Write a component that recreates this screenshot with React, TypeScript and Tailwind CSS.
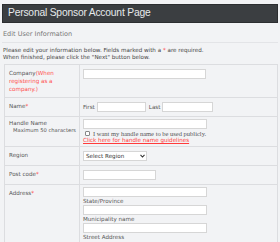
import React from 'react';

const labelCls = 'border border-[#dcdde0] align-top pl-[4px] pr-[2px] py-[4px] text-[#555]';
const fieldCls = 'border border-[#dcdde0] align-top px-[3px] py-[4px]';
const inputCls = 'block h-[10px] bg-white border border-[#d6d6d6]';

function Req() {
  return <span className="text-[#ff3b3b]">*</span>;
}

export default function App() {
  return (
    <div
      className="w-[280px] h-[242px] overflow-hidden bg-[#f2f3f5] px-[2px] pt-[4px] text-[7px] leading-[8px] text-[#555]"
      style={{ fontFamily: '"DejaVu Sans", Verdana, sans-serif' }}
    >
      {/* Title bar */}
      <div className="h-[19px] bg-[#3b3e41] border border-[#2c2e30] flex items-center pl-[5px]">
        <span
          className="text-[10.3px] leading-none text-[#e6e9eb] tracking-[-0.2px]"
          style={{ fontFamily: '"Liberation Sans", Arial, sans-serif' }}
        >
          Personal Sponsor Account Page
        </span>
      </div>

      <div className="mt-[7px] px-[1px] pb-[4px] border-b border-[#e3e4e7] text-[6.5px] text-[#777]">
        Edit User Information
      </div>

      <p className="mt-[4px] px-[1px] text-[5.6px] leading-[7px] text-[#444]">
        Please edit your information below. Fields marked with a <Req /> are required.
        <br />
        When finished, please click the "Next" button below.
      </p>

      <table className="table-fixed mt-[3px] ml-[2px] w-[273px] border-collapse text-[5.6px] leading-[8px]">
        <colgroup>
          <col className="w-[75px]" />
          <col className="w-[198px]" />
        </colgroup>
        <tbody>
          <tr className="h-[30px]">
            <td className={labelCls}>
              Company<span className="text-[#ff4d4d]">(When registering as a company.)</span>
            </td>
            <td className={fieldCls}>
              <div className={`${inputCls} w-[123px]`} />
            </td>
          </tr>
          <tr className="h-[19px]">
            <td className={`${labelCls} align-middle`}>
              Name<Req />
            </td>
            <td className={`${fieldCls} align-middle`}>
              <div className="flex items-center gap-[2px]">
                <span>First</span>
                <div className={`${inputCls} w-[49px]`} />
                <span className="ml-[1px]">Last</span>
                <div className={`${inputCls} w-[51px]`} />
              </div>
            </td>
          </tr>
          <tr className="h-[29px]">
            <td className={`${labelCls} pt-[3px] leading-[7px]`}>
              Handle Name
              <div className="pl-[4px] whitespace-nowrap text-[5.2px]">Maximum 50 characters</div>
            </td>
            <td className={`${fieldCls} pt-[2px] pb-[2px]`}>
              <div className={`${inputCls} w-[124px]`} />
              <div className="flex items-center gap-[3px] mt-[1px] pl-[2px]">
                <span className="block w-[5px] h-[5px] border border-[#888] bg-white rounded-[1px]" />
                <span
                  className="text-[6.5px] leading-[7px] text-[#555]"
                  style={{ fontFamily: '"Liberation Serif", "Times New Roman", serif' }}
                >
                  I want my handle name to be used publicly.
                </span>
              </div>
              <div className="text-[5.6px] leading-[7px] text-[#ff3b3b] underline">
                Click here for handle name guidelines
              </div>
            </td>
          </tr>
          <tr className="h-[18px]">
            <td className={`${labelCls} align-middle`}>Region</td>
            <td className={`${fieldCls} align-middle`}>
              <div className="flex items-center justify-between w-[64px] h-[10px] bg-white border border-[#d6d6d6] pl-[2px] pr-[1px] text-[5.6px] text-[#333]">
                <span>Select Region</span>
                <svg width="5" height="4" viewBox="0 0 5 4">
                  <path d="M0.5 0.8 L2.5 3 L4.5 0.8" stroke="#333" strokeWidth="1.1" fill="none" />
                </svg>
              </div>
            </td>
          </tr>
          <tr className="h-[19px]">
            <td className={`${labelCls} align-middle`}>
              Post code<Req />
            </td>
            <td className={`${fieldCls} align-middle`}>
              <div className={`${inputCls} w-[73px]`} />
            </td>
          </tr>
          <tr className="h-[59px]">
            <td className={labelCls}>
              Address<Req />
            </td>
            <td className={`${fieldCls} pt-[2px] pb-[2px]`}>
              <div className="flex flex-col">
                <div className={`${inputCls} w-[124px]`} />
                <span className="mt-[1px] mb-[1px] leading-[6px]">State/Province</span>
                <div className={`${inputCls} w-[124px]`} />
                <span className="mt-[1px] mb-[1px] leading-[6px]">Municipality name</span>
                <div className={`${inputCls} w-[124px]`} />
                <span className="mt-[1px] leading-[6px]">Street Address</span>
              </div>
            </td>
          </tr>
          <tr className="h-[20px]">
            <td className={labelCls} />
            <td className={fieldCls} />
          </tr>
        </tbody>
      </table>
    </div>
  );
}
